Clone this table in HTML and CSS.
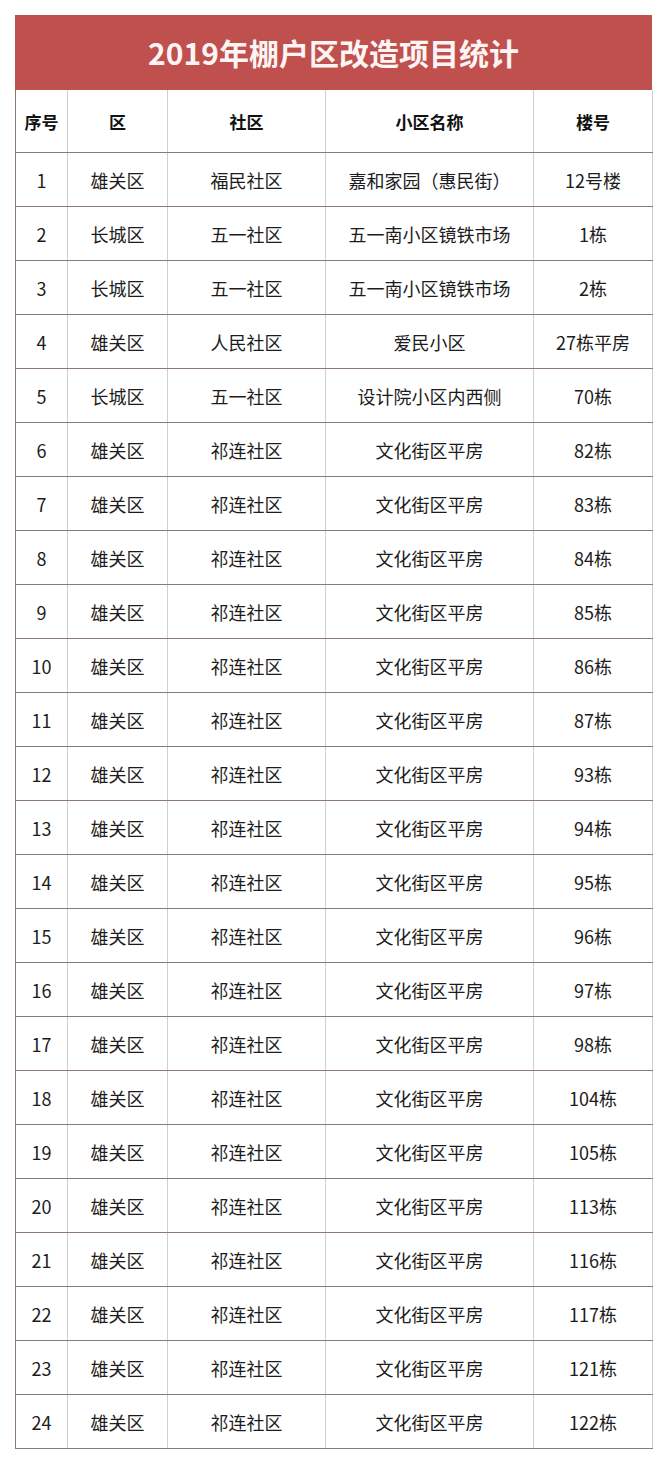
FILE: index.html
```html
<!DOCTYPE html>
<html lang="zh">
<head>
<meta charset="utf-8">
<link rel="stylesheet" href="styles.css">
</head>
<body>
<div class="wrap">
<div class="title">2019年棚户区改造项目统计</div>
<table class="grid">
<colgroup><col class="c1"><col class="c2"><col class="c3"><col class="c4"><col class="c5"></colgroup>
<thead>
<tr><th>序号</th><th>区</th><th>社区</th><th>小区名称</th><th>楼号</th></tr>
</thead>
<tbody>
<tr><td>1</td><td>雄关区</td><td>福民社区</td><td>嘉和家园（惠民街）</td><td>12号楼</td></tr>
<tr><td>2</td><td>长城区</td><td>五一社区</td><td>五一南小区镜铁市场</td><td>1栋</td></tr>
<tr><td>3</td><td>长城区</td><td>五一社区</td><td>五一南小区镜铁市场</td><td>2栋</td></tr>
<tr><td>4</td><td>雄关区</td><td>人民社区</td><td>爱民小区</td><td>27栋平房</td></tr>
<tr><td>5</td><td>长城区</td><td>五一社区</td><td>设计院小区内西侧</td><td>70栋</td></tr>
<tr><td>6</td><td>雄关区</td><td>祁连社区</td><td>文化街区平房</td><td>82栋</td></tr>
<tr><td>7</td><td>雄关区</td><td>祁连社区</td><td>文化街区平房</td><td>83栋</td></tr>
<tr><td>8</td><td>雄关区</td><td>祁连社区</td><td>文化街区平房</td><td>84栋</td></tr>
<tr><td>9</td><td>雄关区</td><td>祁连社区</td><td>文化街区平房</td><td>85栋</td></tr>
<tr><td>10</td><td>雄关区</td><td>祁连社区</td><td>文化街区平房</td><td>86栋</td></tr>
<tr><td>11</td><td>雄关区</td><td>祁连社区</td><td>文化街区平房</td><td>87栋</td></tr>
<tr><td>12</td><td>雄关区</td><td>祁连社区</td><td>文化街区平房</td><td>93栋</td></tr>
<tr><td>13</td><td>雄关区</td><td>祁连社区</td><td>文化街区平房</td><td>94栋</td></tr>
<tr><td>14</td><td>雄关区</td><td>祁连社区</td><td>文化街区平房</td><td>95栋</td></tr>
<tr><td>15</td><td>雄关区</td><td>祁连社区</td><td>文化街区平房</td><td>96栋</td></tr>
<tr><td>16</td><td>雄关区</td><td>祁连社区</td><td>文化街区平房</td><td>97栋</td></tr>
<tr><td>17</td><td>雄关区</td><td>祁连社区</td><td>文化街区平房</td><td>98栋</td></tr>
<tr><td>18</td><td>雄关区</td><td>祁连社区</td><td>文化街区平房</td><td>104栋</td></tr>
<tr><td>19</td><td>雄关区</td><td>祁连社区</td><td>文化街区平房</td><td>105栋</td></tr>
<tr><td>20</td><td>雄关区</td><td>祁连社区</td><td>文化街区平房</td><td>113栋</td></tr>
<tr><td>21</td><td>雄关区</td><td>祁连社区</td><td>文化街区平房</td><td>116栋</td></tr>
<tr><td>22</td><td>雄关区</td><td>祁连社区</td><td>文化街区平房</td><td>117栋</td></tr>
<tr><td>23</td><td>雄关区</td><td>祁连社区</td><td>文化街区平房</td><td>121栋</td></tr>
<tr><td>24</td><td>雄关区</td><td>祁连社区</td><td>文化街区平房</td><td>122栋</td></tr>
</tbody>
</table>
</div>
</body>
</html>
```

FILE: styles.css
```css
html, body {
  margin: 0;
  padding: 0;
  background: #ffffff;
}
body {
  font-family: "Noto Sans CJK SC", "Noto Sans", sans-serif;
  color: #1c1c1c;
}
.wrap {
  width: 637px;
  padding: 15px 0 0 15px;
}
.title {
  height: 75px;
  background: #c0504d;
  color: #fdf5f4;
  font-size: 30px;
  font-weight: 700;
  line-height: 75px;
  text-align: center;
  box-sizing: border-box;
}
.grid {
  width: 637px;
  border-collapse: collapse;
  table-layout: fixed;
}
.c1 { width: 52px; }
.c2 { width: 100px; }
.c3 { width: 158px; }
.c4 { width: 208px; }
.c5 { width: 119px; }
.grid th, .grid td {
  padding: 0;
  text-align: center;
  border-left: 1px solid #cfcfcf;
  border-right: 1px solid #cfcfcf;
  border-bottom: 1px solid #8d7a76;
  white-space: nowrap;
}
.grid th:first-child, .grid td:first-child {
  border-left: 1px solid #8d7a76;
}
.grid th {
  height: 62px;
  font-size: 17px;
  font-weight: 700;
  color: #111;
}
.grid td {
  height: 53px;
  font-size: 18px;
  font-weight: 400;
}
```
